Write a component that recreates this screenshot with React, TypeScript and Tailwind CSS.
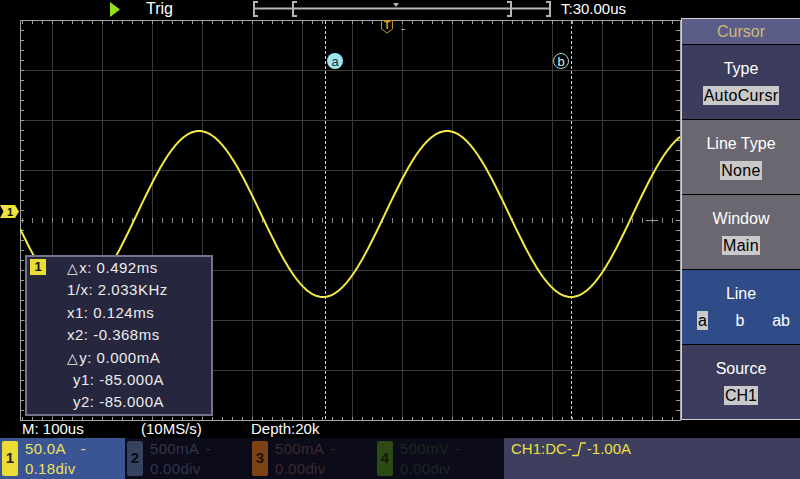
import React from 'react';

const W = 661;
const H = 401;

// sine trace in grid-local coords (grid starts at x=20, y=20 of the page)
const tracePoints = (() => {
  const pts: string[] = [];
  for (let x = 0; x <= 660; x++) {
    const ax = x + 20;
    const y = 214 - 83 * Math.cos((2 * Math.PI * (ax - 199)) / 248) - 20;
    pts.push(`${x},${y.toFixed(1)}`);
  }
  return pts.join(' ');
})();

const vLines = Array.from({ length: 13 }, (_, i) => 32.5 + i * 50);
const hLines = [50.5, 100.5, 150.5, 250.5, 300.5, 350.5];
const xTicks = Array.from({ length: 66 }, (_, i) => 2.5 + i * 10);
const yTicks = Array.from({ length: 39 }, (_, i) => 10.5 + i * 10);

function Grid() {
  return (
    <svg width={W} height={H} className="block">
      {vLines.map((x) => (
        <line key={`v${x}`} x1={x} y1={0} x2={x} y2={400} stroke="#3c3c3c" />
      ))}
      {hLines.map((y) => (
        <line key={`h${y}`} x1={0} y1={y} x2={660} y2={y} stroke="#3c3c3c" />
      ))}
      {xTicks.map((x) => (
        <g key={`t${x}`} stroke="#9c9c9c">
          <line x1={x} y1={0} x2={x} y2={4} />
          <line x1={x} y1={397} x2={x} y2={400} />
          <line x1={x} y1={198} x2={x} y2={203} stroke="#8a8a8a" />
        </g>
      ))}
      {yTicks.map((y) => (
        <g key={`y${y}`} stroke="#9c9c9c">
          <line x1={0} y1={y} x2={4} y2={y} />
          <line x1={656} y1={y} x2={660} y2={y} />
        </g>
      ))}
      <line x1={626} y1={200.5} x2={638} y2={200.5} stroke="#9c9c9c" />
      <rect x={0.5} y={0.5} width={660} height={400} fill="none" stroke="#a4a4a4" />

      <polyline points={tracePoints} fill="none" stroke="#f2e846" strokeWidth={2} />

      {/* cursors */}
      <line x1={305.5} y1={1} x2={305.5} y2={400} stroke="#b8eaf0" strokeDasharray="3 2" />
      <line x1={551.5} y1={1} x2={551.5} y2={400} stroke="#a8e0e0" strokeDasharray="3 2" />
      <circle cx={315} cy={41} r={8} fill="#9ee6f2" />
      <text x={315} y={45.5} textAnchor="middle" fontSize={13} fill="#1c2a3a" fontFamily="Liberation Sans, sans-serif">
        a
      </text>
      <circle cx={541} cy={41} r={7.5} fill="#000" stroke="#9ad8d8" />
      <text x={541} y={45.5} textAnchor="middle" fontSize={13} fill="#c8f0f0" fontFamily="Liberation Sans, sans-serif">
        b
      </text>

      {/* trigger position marker */}
      <path d="M361.5,0.5 H372.5 V9 L367,13 L361.5,9 Z" fill="#000" stroke="#c8921e" />
      <text x={367} y={9} textAnchor="middle" fontSize={10} fontWeight="bold" fill="#e0a428" fontFamily="Liberation Sans, sans-serif">
        T
      </text>
      <line x1={381} y1={9.5} x2={385} y2={9.5} stroke="#9c9c9c" />
    </svg>
  );
}

function MenuItem({ label, value, bg }: { label: string; value: string; bg: string }) {
  return (
    <div className={`flex h-[75px] flex-col items-center border-b border-black pt-[14px] ${bg}`}>
      <span className="text-[16px] leading-[20px] text-white">{label}</span>
      <span className="mt-[7px] bg-[#c9c9c9] px-[1px] text-[16px] leading-[19px] tracking-[0.3px] text-black">{value}</span>
    </div>
  );
}

function Channel({
  n,
  scale,
  pos,
  bg,
  box,
  boxText,
  text,
  w,
}: {
  n: string;
  scale: string;
  pos: string;
  bg: string;
  box: string;
  boxText: string;
  text: string;
  w: string;
}) {
  return (
    <div className={`flex h-full items-center ${w} ${bg}`}>
      <div className={`ml-[2px] flex h-[35px] w-[16px] items-center justify-center rounded-[2px] text-[15px] font-bold ${box} ${boxText}`}>
        {n}
      </div>
      <div className={`ml-[7px] flex flex-col text-[15px] leading-[20px] tracking-[0.3px] ${text}`}>
        <span className="flex w-[61px] justify-between">
          <span>{scale}</span>
          <span>-</span>
        </span>
        <span>{pos}</span>
      </div>
    </div>
  );
}

function Delta() {
  return <span className="mr-[1px] font-['DejaVu_Sans',sans-serif] text-[14px]">△</span>;
}

export default function App() {
  return (
    <div className="relative h-[479px] w-[800px] overflow-hidden bg-black font-['Liberation_Sans',Arial,sans-serif] text-white">
      {/* top status bar */}
      <div className="flex h-[18px] items-center">
        <svg width={11} height={15} className="ml-[110px]">
          <path d="M0,0 L10,7.5 L0,15 Z" fill="#92e01e" />
        </svg>
        <span className="ml-[25px] text-[16px] leading-[18px]">Trig</span>
        <svg width={300} height={18} className="ml-[80px]">
          <g stroke="#b4b4b4" strokeWidth={2} fill="none">
            <path d="M5,2 H1 V16 H5" />
            <path d="M44,2 H40 V16 H44" />
            <path d="M254,2 H258 V16 H254" />
            <path d="M293,2 H297 V16 H293" />
          </g>
          <line x1={2} y1={8.5} x2={296} y2={8.5} stroke="#b4b4b4" strokeWidth={2} />
          <path d="M140,3 H146 L143,7 Z" fill="#b4b4b4" />
        </svg>
        <span className="ml-[8px] text-[15px] leading-[18px]">T:30.00us</span>
      </div>

      {/* scope area + soft menu */}
      <div className="flex h-[402px]">
        <div className="relative w-[20px]">
          <svg width={20} height={14} className="absolute left-0 top-[187px]">
            <path d="M0,0 H15 L19,6.5 L15,13 H0 L3.5,6.5 Z" fill="#f0e23c" />
            <text x={10} y={11} textAnchor="middle" fontSize={11} fontWeight="bold" fill="#111" fontFamily="Liberation Sans, sans-serif">
              1
            </text>
          </svg>
        </div>
        <div className="relative w-[661px] pt-[2px]">
          <Grid />
          <div className="absolute left-[5px] top-[237px] h-[161px] w-[188px] border-2 border-[#74748e] bg-[#26263e]">
            <div className="absolute left-[3px] top-[2px] flex h-[16px] w-[16px] items-center justify-center bg-[#ecdc36] text-[13px] font-bold text-[#111]">
              1
            </div>
            <div className="flex flex-col pl-[40px] text-[15px] leading-[22.4px] tracking-[0.5px] text-[#ececec]">
              <span>
                <Delta />x: 0.492ms
              </span>
              <span>1/x: 2.033KHz</span>
              <span>x1: 0.124ms</span>
              <span>x2: -0.368ms</span>
              <span>
                <Delta />y: 0.000mA
              </span>
              <span className="pl-[6px]">y1: -85.000A</span>
              <span className="pl-[6px]">y2: -85.000A</span>
            </div>
          </div>
        </div>
        <div className="flex w-[119px] flex-col border-y border-l border-[#d4d4d4]">
          <div className="flex h-[26px] items-center justify-center border-b border-black bg-[#5c5c88] text-[16px] text-[#cdbb78]">
            Cursor
          </div>
          <MenuItem label="Type" value="AutoCursr" bg="bg-[#3c3c5f]" />
          <MenuItem label="Line Type" value="None" bg="bg-[#6a6771]" />
          <MenuItem label="Window" value="Main" bg="bg-[#6a6771]" />
          <div className="flex h-[75px] flex-col items-center border-b border-black bg-[#304c88] pt-[14px]">
            <span className="text-[16px] leading-[20px] text-white">Line</span>
            <div className="mt-[7px] flex w-full justify-between pl-[15px] pr-[10px] text-[16px] leading-[19px] text-white">
              <span className="bg-[#c9c9c9] px-[1px] text-black">a</span>
              <span>b</span>
              <span>ab</span>
            </div>
          </div>
          <div className="flex h-[74px] flex-col items-center bg-[#3c3c5c] pt-[14px]">
            <span className="text-[16px] leading-[20px] text-white">Source</span>
            <span className="mt-[7px] bg-[#c9c9c9] px-[1px] text-[16px] leading-[19px] text-black">CH1</span>
          </div>
        </div>
      </div>

      {/* timebase row */}
      <div className="flex h-[18px] items-center text-[15px] leading-[18px]">
        <span className="ml-[22px] w-[119px]">M: 100us</span>
        <span className="w-[110px]">(10MS/s)</span>
        <span>Depth:20k</span>
      </div>

      {/* channel bar */}
      <div className="flex h-[41px]">
        <Channel n="1" scale="50.0A" pos="0.18div" w="w-[125px]" bg="bg-[#3b5494]" box="bg-[#ecdc36]" boxText="text-[#222]" text="text-[#ece060]" />
        <Channel n="2" scale="500mA" pos="0.00div" w="w-[125px]" bg="bg-[#0b0b1a]" box="bg-[#35435f]" boxText="text-[#0c0c18]" text="text-[#34344c]" />
        <Channel n="3" scale="500mA" pos="0.00div" w="w-[125px]" bg="bg-[#0b0b1a]" box="bg-[#7c4214]" boxText="text-[#1e100a]" text="text-[#3e2a2c]" />
        <Channel n="4" scale="500mV" pos="0.00div" w="w-[129px]" bg="bg-[#0b0b1a]" box="bg-[#2e4a14]" boxText="text-[#0e1a08]" text="text-[#1e2620]" />
        <div className="flex flex-1 items-start bg-[#3e3e5f] pl-[7px] pt-[1px] text-[15px] leading-[20px] text-[#ece040]">
          <span>CH1:DC-</span>
          <svg width={15} height={18} className="mt-[1px]">
            <path d="M0,15.5 H6 L9,3 H14" fill="none" stroke="#ece040" strokeWidth={1.3} />
          </svg>
          <span>-1.00A</span>
        </div>
      </div>
    </div>
  );
}
